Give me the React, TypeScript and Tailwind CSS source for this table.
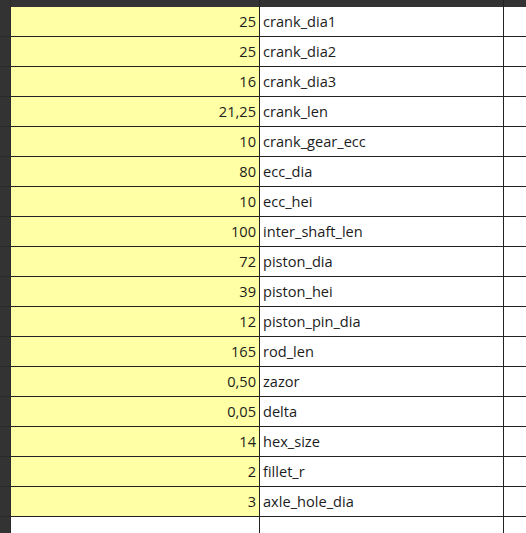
const rows: [string, string][] = [
	["25", "crank_dia1"],
	["25", "crank_dia2"],
	["16", "crank_dia3"],
	["21,25", "crank_len"],
	["10", "crank_gear_ecc"],
	["80", "ecc_dia"],
	["10", "ecc_hei"],
	["100", "inter_shaft_len"],
	["72", "piston_dia"],
	["39", "piston_hei"],
	["12", "piston_pin_dia"],
	["165", "rod_len"],
	["0,50", "zazor"],
	["0,05", "delta"],
	["14", "hex_size"],
	["2", "fillet_r"],
	["3", "axle_hole_dia"],
];

export default function App() {
	return (
		<div className="w-[526px] h-[533px] overflow-hidden bg-white text-[14.6px] text-[#1c1c1c] font-['Open_Sans',sans-serif]">
			{/* header strip */}
			<div className="flex h-[7px] bg-[#333333]">
				<div className="w-[11px] border-r border-[#2a2a2a]" />
				<div className="w-[249px] border-r border-[#222]" />
				<div className="w-[244px] border-r border-[#222]" />
				<div className="flex-1" />
			</div>
			{rows.map(([value, name]) => (
				<div key={name} className="flex h-[30px]">
					<div className="w-[11px] bg-[#333333] border-r border-b border-[#2a2a2a]" />
					<div className="w-[249px] bg-[#ffffa6] border-r border-b border-[#222] flex items-center justify-end pr-[3px] pt-[1px]">
						{value}
					</div>
					<div className="w-[244px] border-r border-b border-[#222] flex items-center pl-[3px] pt-[1px]">
						{name}
					</div>
					<div className="flex-1 border-b border-[#222]" />
				</div>
			))}
			<div className="flex h-[30px]">
				<div className="w-[11px] bg-[#333333] border-r border-[#2a2a2a]" />
				<div className="w-[249px] border-r border-[#222]" />
				<div className="w-[244px] border-r border-[#222]" />
				<div className="flex-1" />
			</div>
		</div>
	);
}
